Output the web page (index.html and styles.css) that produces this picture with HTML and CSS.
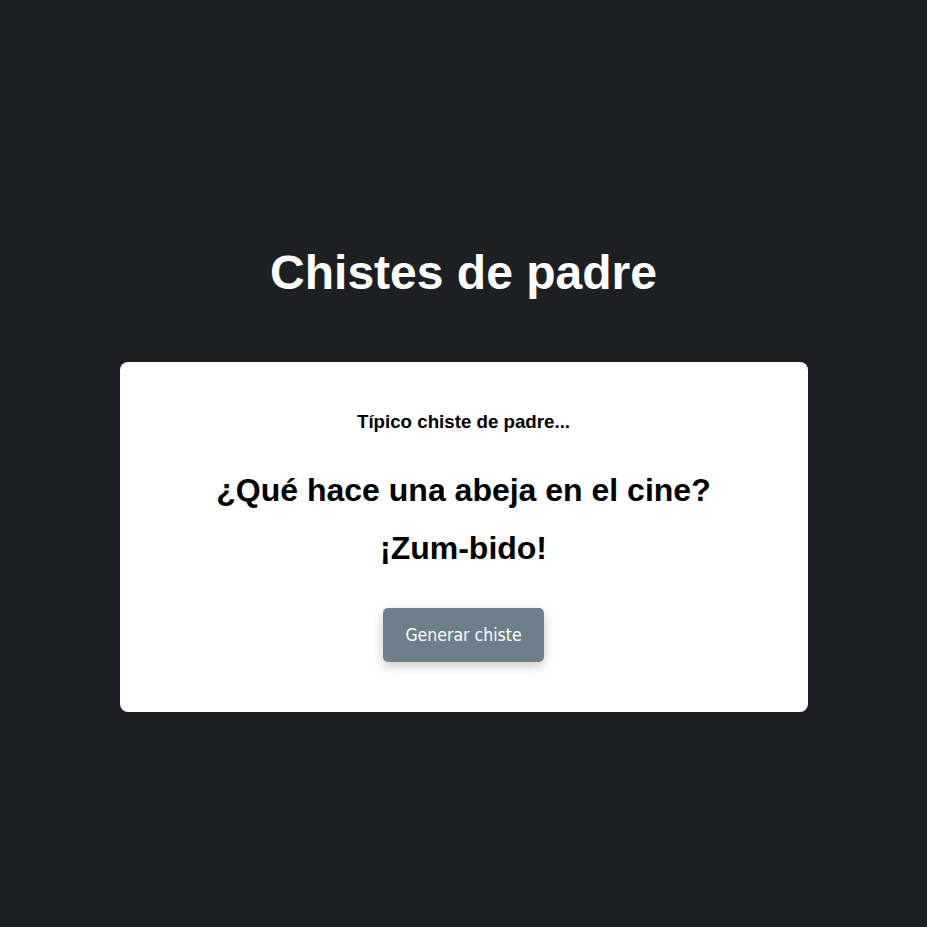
FILE: index.html
```html
<!DOCTYPE html>
<html lang="es">
<head>
<meta charset="utf-8">
<title>Chistes de padre</title>
<link rel="stylesheet" href="styles.css">
</head>
<body>
<main class="page">
  <h1 class="title">Chistes de padre</h1>
  <section class="card">
    <h3 class="subtitle">Típico chiste de padre...</h3>
    <h2 class="joke joke-setup">¿Qué hace una abeja en el cine?</h2>
    <h2 class="joke joke-punch">¡Zum-bido!</h2>
    <button class="btn" type="button">Generar chiste</button>
  </section>
</main>
</body>
</html>
```
FILE: styles.css
```css
html, body {
  margin: 0;
  padding: 0;
  background: #1e1f23;
  font-family: "Liberation Sans", Arial, sans-serif;
}
.page {
  display: flex;
  flex-direction: column;
  align-items: center;
  padding-top: 245px;
  min-height: 927px;
  box-sizing: border-box;
}
.title {
  margin: 0;
  color: #ffffff;
  font-size: 48px;
  font-weight: 700;
  line-height: 55px;
}
.card {
  margin-top: 62px;
  width: 688px;
  box-sizing: border-box;
  background: #ffffff;
  border-radius: 8px;
  padding: 49px 20px 50px;
  display: flex;
  flex-direction: column;
  align-items: center;
  text-align: center;
}
.subtitle {
  margin: 0;
  font-size: 18.72px;
  line-height: 21px;
  font-weight: 700;
  color: #000;
}
.joke {
  margin: 0;
  font-size: 32px;
  line-height: 37px;
  font-weight: 700;
  color: #000;
}
.joke-setup {
  margin-top: 40px;
}
.joke-punch {
  margin-top: 21px;
}
.btn {
  margin-top: 41px;
  height: 54px;
  padding: 0 22px;
  border: none;
  border-radius: 5px;
  background: #6c7f8a;
  color: #ffffff;
  font-family: "DejaVu Sans Condensed", "DejaVu Sans", sans-serif;
  font-size: 17.5px;
  box-shadow: 0 4px 12px rgba(0, 0, 0, 0.22);
  cursor: pointer;
}
```
